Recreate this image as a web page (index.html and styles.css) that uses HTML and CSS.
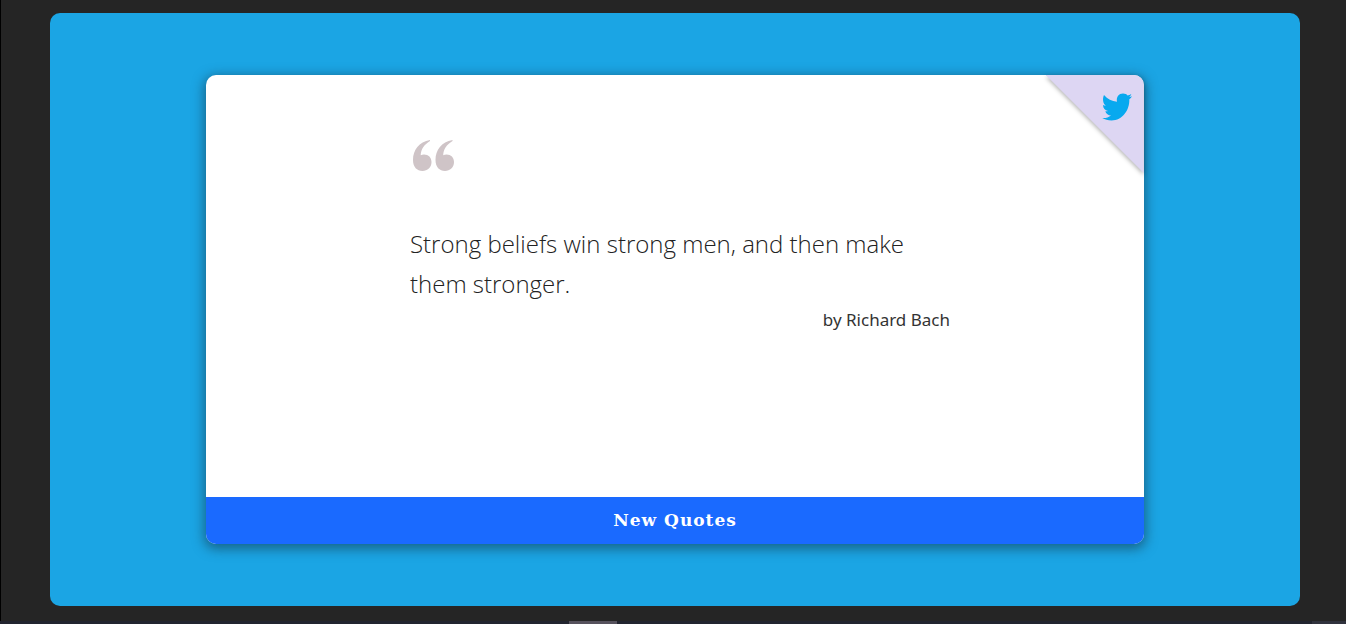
FILE: index.html
```html
<!DOCTYPE html>
<html lang="en">
<head>
<meta charset="utf-8">
<meta name="viewport" content="width=device-width, initial-scale=1">
<title>Quotes</title>
<link rel="stylesheet" href="styles.css">
</head>
<body>
<div class="screen">
  <div class="frame">
    <main class="panel">
      <article class="card">
        <div class="corner">
          <a class="share" href="#tweet" aria-label="Tweet this quote">
            <svg class="bird" viewBox="0 0 30 28" aria-hidden="true"><path d="M2 2c3.500 4.200 7.800 6.400 13 6.700C14 4 17 .5 21 .5c2 0 3.500.7 4.600 1.900 1.300-.3 2.600-.8 3.700-1.500-.4 1.400-1.200 2.400-2.300 3.200 1-.1 2-.4 3-.8-.7 1.200-1.600 2.200-2.700 3C27.800 17 20.500 27.500 9.500 27.500 6 27.500 3 26.600.3 25c3.200.3 6.300-.6 8.700-2.500-2.700-.1-4.900-1.900-5.700-4.300 1 .2 1.900.1 2.700-.1-2.900-.7-5-3.200-5-6.200.9.500 1.800.8 2.800.8C1 10.500.2 6 2 2z"/></svg>
          </a>
        </div>
        <div class="content">
          <svg class="mark" viewBox="0 0 41 31" aria-hidden="true">
            <path d="M17 0C6 2 0 10 0 20c0 7 4 11 9.500 11 5 0 9-3.500 9-9 0-4.500-3-7.500-7.500-7.500-1.300 0-2.300.2-3.300.7C8 9.500 11 4.500 17 1z"/>
            <path d="M39.500 0c-11 2-17 10-17 20 0 7 4 11 9.500 11 5 0 9-3.500 9-9 0-4.500-3-7.500-7.500-7.500-1.300 0-2.300.2-3.300.7.3-5.700 3.300-10.700 9.300-14.200z"/>
          </svg>
          <blockquote class="quote">Strong beliefs win strong men, and then make them stronger.</blockquote>
          <p class="author">by Richard Bach</p>
        </div>
        <button class="next" type="button">New Quotes</button>
      </article>
    </main>
  </div>
  <div class="strip"><span class="strip-tab"></span><span class="strip-end"></span></div>
</div>
</body>
</html>
```
FILE: styles.css
```css
* { box-sizing: border-box; }

body {
  margin: 0;
  background: #252525;
  color: #333;
  font-family: "Noto Sans", "Open Sans", sans-serif;
}

.screen {
  display: flex;
  flex-direction: column;
  min-height: 100vh;
}

.frame {
  flex: 1;
  display: flex;
  padding: 13px 46px 15px 49px;
  border-left: 1px solid #000;
}

.panel {
  flex: 1;
  display: flex;
  justify-content: center;
  border-radius: 10px;
  background: #1ba5e4;
}

.card {
  position: relative;
  display: flex;
  flex-direction: column;
  width: 75%;
  margin: 62px 0;
  border-radius: 10px;
  background: #fff;
  box-shadow: 0 3px 12px 2px rgba(20, 60, 80, .6);
}

.corner {
  position: absolute;
  top: 0;
  right: 0;
  overflow: hidden;
  border-top-right-radius: 10px;
  padding: 0 0 8px 8px;
  filter: drop-shadow(0 2px 2px rgba(0, 0, 0, .3));
}

.share {
  display: flex;
  justify-content: flex-end;
  align-items: flex-start;
  width: 98px;
  height: 98px;
  padding: 18px 12px;
  background: #ddd6f3;
  clip-path: polygon(0 0, 100% 0, 100% 100%);
}

.bird {
  width: 30px;
  height: 28px;
  fill: #08a9ef;
}

.content {
  flex: 1;
  width: 100%;
  max-width: 550px;
  margin: 0 auto;
  padding: 65px 0 0 10px;
}

.mark {
  display: block;
  width: 41px;
  height: 31px;
  margin: 0 0 53px 3px;
  fill: #cfc4c7;
}

.quote {
  margin: 0;
  padding-right: 32px;
  color: #222;
  font-family: "Open Sans", "Noto Sans", sans-serif;
  font-size: 24px;
  font-weight: 300;
  line-height: 40px;
}

.author {
  margin: 0;
  font-size: 17px;
  line-height: 32px;
  text-align: right;
}

.next {
  height: 47px;
  border: 0;
  border-radius: 0 0 10px 10px;
  padding: 0 0 2px;
  background: #1a6aff;
  color: #fff;
  font-family: "DejaVu Serif", serif;
  font-size: 17px;
  font-weight: 700;
  letter-spacing: 1px;
  cursor: pointer;
}

.strip {
  display: flex;
  justify-content: space-between;
  height: 3px;
  padding-left: 569px;
  background: #22242f;
}

.strip-tab {
  width: 48px;
  background: #56525d;
}

.strip-end {
  width: 34px;
  background: #30323d;
}
```
